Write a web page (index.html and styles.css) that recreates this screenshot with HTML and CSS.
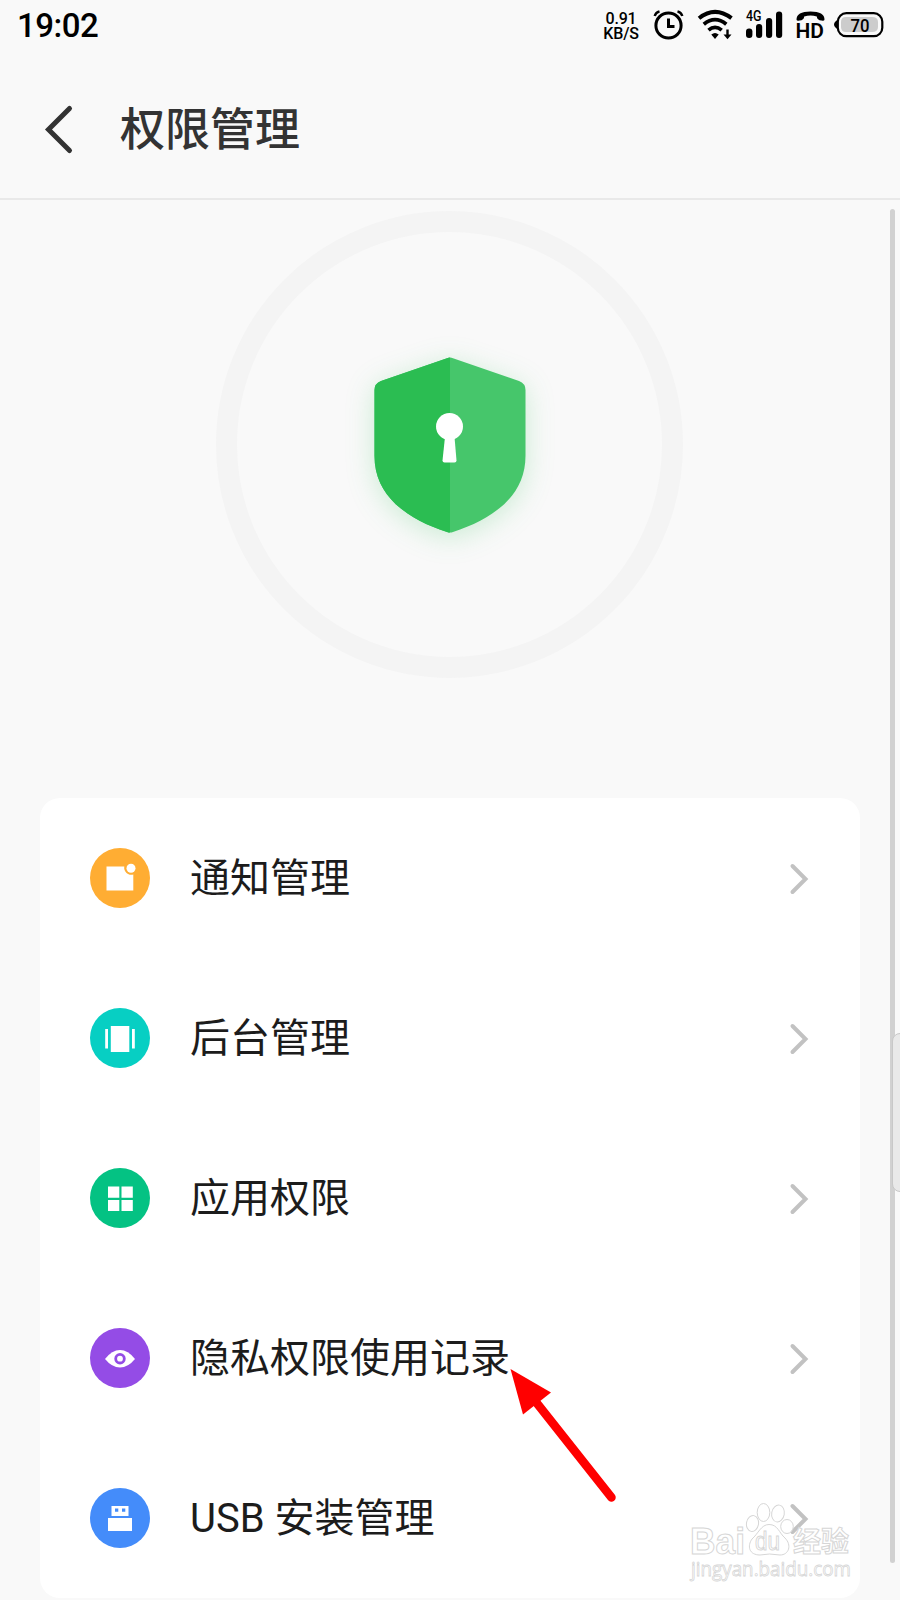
FILE: index.html
```html
<!DOCTYPE html>
<html lang="zh-CN">
<head>
  <meta charset="UTF-8">
  <meta name="viewport" content="width=device-width, initial-scale=1.0">
  <title>权限管理</title>
  <link rel="stylesheet" href="styles.css">
</head>
<body>
  <div class="status-bar">
    <span class="time">19:02</span>
    <div class="status-icons">
      <div class="speed"><span>0.91</span><span>KB/S</span></div>
      <svg class="alarm" width="30" height="30" viewBox="0 0 30 30" fill="none" stroke="#000">
        <circle cx="14.5" cy="15.5" r="12.6" stroke-width="3"/>
        <path d="M14.5 8.5v8h6" stroke-width="3"/>
        <path d="M.7 6Q1.5 2.500 5.500 1.300M23.500 1.300Q27.500 2.500 28.300 6" stroke-width="2.4"/>
      </svg>
      <svg class="wifi" width="36" height="30" viewBox="0 0 36 30" fill="none" stroke="#000">
        <path d="M1 8.200Q17-4.500 33.500 8.200" stroke-width="4"/>
        <path d="M5.800 14.200Q17 5 28.300 14.200" stroke-width="3.800"/>
        <path d="M10.500 20.200Q17 14.500 23.700 20.200" stroke-width="3.600"/>
        <path d="M13.300 24.500Q17 21.500 20.700 24.500L17 29z" fill="#000" stroke="none"/>
        <path d="M29.500 19.500v7" stroke-width="2.400"/>
        <path d="M25.500 24.500h8l-4 4.800z" fill="#000" stroke="none"/>
      </svg>
      <svg class="signal" width="38" height="30" viewBox="0 0 38 30">
        <text class="net" x="0" y="11" textLength="15.500" lengthAdjust="spacingAndGlyphs">4G</text>
        <rect x="0" y="18.500" width="6.400" height="9.500" rx="3"/>
        <rect x="10" y="14" width="6.200" height="14" rx="3"/>
        <rect x="20" y="8" width="6.200" height="20" rx="3"/>
        <rect x="30" y="1.500" width="6.200" height="26.500" rx="3"/>
      </svg>
      <svg class="volte" width="30" height="36" viewBox="0 0 30 36">
        <path d="M.5 9.500Q.5 1.500 14.500 1.500T28.500 9.500Q28.500 11 25.500 10.600Q21 10.200 20.800 6.500Q14.500 4.500 8.200 6.500Q8 10.200 3.500 10.600Q.5 11 .5 9.500z"/>
        <text class="hd" x="-.5" y="28" textLength="28.500" lengthAdjust="spacingAndGlyphs">HD</text>
      </svg>
      <svg class="battery" width="50" height="28" viewBox="0 0 50 28">
        <path d="M4 8.500Q0 11 0 13.500T4 18.500z"/>
        <rect x="3.800" y="2.200" width="44.500" height="23" rx="8.500" fill="none" stroke="#000" stroke-width="2.200"/>
        <path d="M12 6h26q6 0 6 5v5q0 5-6 5H12q-5 0-5-5v-5q0-5 5-5z" fill="#ccc"/>
        <text class="percent" x="16.500" y="20.500" textLength="19" lengthAdjust="spacingAndGlyphs">70</text>
      </svg>
    </div>
  </div>

  <header class="header">
    <svg class="back" width="30" height="50" viewBox="0 0 30 50" fill="none" stroke="#333" stroke-width="5" stroke-linecap="round">
      <path d="M25.500 4.500L4.500 25.500L25.500 46.500"/>
    </svg>
    <h1>权限管理</h1>
  </header>

  <main>
    <div class="hero">
      <div class="ring">
        <svg class="shield" width="152" height="178" viewBox="0 0 152 178">
          <path d="M73 1.200Q76 0 79 1.200L145 24Q151.500 26.500 151.500 33V99C151.500 139 119 162 79 175Q76 176 73 175C33 162 .5 139 .5 99V33Q.5 26.500 7 24z" fill="#46c66b"/>
          <path d="M76 .5Q74.500 .5 73 1.200L7 24Q.5 26.500 .5 33V99C.5 139 33 162 73 175Q74.500 175.600 76 175.600z" fill="#2bbd52"/>
          <circle cx="75.500" cy="69.500" r="13.500" fill="#fff"/>
          <path d="M71 80h9.500l2 23.500q0 2-2 2h-10q-2 0-2-2z" fill="#fff"/>
        </svg>
      </div>
    </div>

    <div class="menu">
      <div class="menu-item">
        <div class="icon orange">
          <svg width="60" height="60" viewBox="0 0 60 60" fill="#fff">
            <path d="M16.500 18.500H34.300A7 7 0 0 0 43.300 26.500V42.500H16.500z"/>
            <circle cx="41" cy="20.200" r="4.500"/>
          </svg>
        </div>
        <span class="label">通知管理</span>
        <svg class="arrow" width="20" height="32" viewBox="0 0 20 32"><path d="M2.500 4l13 13l-13 13"/></svg>
      </div>
      <div class="menu-item">
        <div class="icon teal">
          <svg width="60" height="60" viewBox="0 0 60 60" fill="#fff">
            <rect x="20.800" y="18" width="18.500" height="26"/>
            <rect x="15.200" y="21" width="2.800" height="19.500"/>
            <rect x="42" y="21" width="2.800" height="19.500"/>
          </svg>
        </div>
        <span class="label">后台管理</span>
        <svg class="arrow" width="20" height="32" viewBox="0 0 20 32"><path d="M2.500 4l13 13l-13 13"/></svg>
      </div>
      <div class="menu-item">
        <div class="icon green">
          <svg width="60" height="60" viewBox="0 0 60 60" fill="#fff">
            <path d="M18 18.500h11.300v11.300H18zM31.500 18.500h11.300v11.300H31.500zM18 32h11.300v11H18zM31.500 32h11.300v11H31.500z"/>
          </svg>
        </div>
        <span class="label">应用权限</span>
        <svg class="arrow" width="20" height="32" viewBox="0 0 20 32"><path d="M2.500 4l13 13l-13 13"/></svg>
      </div>
      <div class="menu-item">
        <div class="icon purple">
          <svg width="60" height="60" viewBox="0 0 60 60">
            <path d="M15 31Q22 22 30 22T45 31Q38 39.500 30 39.500T15 31z" fill="#fff"/>
            <circle cx="30" cy="30.700" r="4.300" fill="#fff" stroke="#944ce6" stroke-width="2.800"/>
          </svg>
        </div>
        <span class="label">隐私权限使用记录</span>
        <svg class="arrow" width="20" height="32" viewBox="0 0 20 32"><path d="M2.500 4l13 13l-13 13"/></svg>
      </div>
      <div class="menu-item">
        <div class="icon blue">
          <svg width="60" height="60" viewBox="0 0 60 60" fill="#fff">
            <path fill-rule="evenodd" d="M21.500 18h17v10h-17zM25 20.500v3.300h3.300v-3.300zM32 20.500v3.300h3.300v-3.300z"/>
            <rect x="18" y="30" width="24" height="13"/>
          </svg>
        </div>
        <span class="label">USB 安装管理</span>
        <svg class="arrow" width="20" height="32" viewBox="0 0 20 32"><path d="M2.500 4l13 13l-13 13"/></svg>
      </div>
    </div>
  </main>

  <div class="scrollbar"></div>
  <div class="side-handle"></div>

  <svg class="pointer" width="110" height="136" viewBox="0 0 110 136">
    <path d="M22 28L101.500 128.500" stroke="#f00" stroke-width="8.500" stroke-linecap="round"/>
    <path d="M.5 0L41 23.500L13 45.500z" fill="#f00"/>
  </svg>

  <svg class="watermark" width="176" height="96" viewBox="0 0 176 96">
    <g class="paw">
      <ellipse cx="64.500" cy="26.500" rx="6" ry="8" transform="rotate(10 64.500 26.500)"/>
      <ellipse cx="75.500" cy="15.500" rx="6.300" ry="9"/>
      <ellipse cx="90" cy="16.500" rx="6.300" ry="8.500" transform="rotate(10 90 16.500)"/>
      <ellipse cx="99" cy="29.500" rx="6.300" ry="7"/>
      <path d="M81 27.500C90 27.500 91 36 97 41C104 48 101 58 92 58Q81 56 72 58C61 58 59 49 64 42C70 37 73 27.500 81 27.500z"/>
    </g>
    <text class="wm-logo" x="2" y="57" textLength="55" lengthAdjust="spacingAndGlyphs">Bai</text>
    <text class="wm-du" x="67" y="53" textLength="25" lengthAdjust="spacingAndGlyphs">du</text>
    <text class="wm-cn" x="105" y="55" textLength="56" lengthAdjust="spacingAndGlyphs">经验</text>
    <text class="wm-url" x="3" y="79" textLength="160" lengthAdjust="spacingAndGlyphs">jingyan.baidu.com</text>
  </svg>
</body>
</html>
```
FILE: styles.css
```css
* {
  box-sizing: border-box;
}
body {
  position: relative;
  width: 900px;
  height: 1600px;
  margin: 0;
  overflow: hidden;
  background: #f9f9f9;
  font-family: Roboto, "Noto Sans CJK SC", sans-serif;
}
svg {
  display: block;
  flex-shrink: 0;
  overflow: visible;
}
.status-bar {
  display: flex;
  justify-content: space-between;
  height: 50px;
  padding: 10px 16px 0 17px;
  color: #000;
}
.time {
  font-size: 33px;
  line-height: 32px;
  font-weight: 500;
  letter-spacing: -0.5px;
}
.status-icons {
  display: flex;
}
.speed {
  display: flex;
  flex-direction: column;
  width: 36px;
  margin-right: 15px;
  padding-top: 1px;
  font-size: 16px;
  line-height: 15px;
  font-weight: 500;
  letter-spacing: -0.2px;
  text-align: center;
}
.alarm {
  margin-right: 14px;
}
.wifi {
  margin-right: 12px;
}
.signal {
  margin-right: 12px;
}
.volte {
  margin-right: 8px;
}
.battery {
  margin-top: 1px;
}
.net {
  font-size: 14px;
  font-weight: 500;
}
.hd {
  font-size: 20px;
  font-weight: 600;
}
.percent {
  font-size: 19px;
  font-weight: 500;
}
.header {
  display: flex;
  align-items: center;
  height: 150px;
  padding: 10px 0 0 44px;
  border-bottom: 2px solid #e9e9e9;
}
.header h1 {
  margin: 3px 0 0 46px;
  font-size: 45px;
  line-height: 60px;
  font-weight: 500;
  color: #333;
}
.hero {
  display: flex;
  justify-content: center;
  height: 598px;
  padding: 11px 1px 0 0;
}
.ring {
  display: flex;
  justify-content: center;
  width: 467px;
  height: 467px;
  padding: 125px 0 0 1px;
  border: 21px solid #f4f4f4;
  border-radius: 50%;
}
.shield {
  filter: drop-shadow(0 5px 14px rgba(43, 189, 82, 0.22));
}
.menu {
  width: 820px;
  height: 800px;
  margin: 0 40px;
  background: #fff;
  border-radius: 20px;
}
.menu-item {
  display: flex;
  align-items: center;
  height: 160px;
  padding: 0 50px;
}
.icon {
  width: 60px;
  height: 60px;
  margin-right: 40px;
  border-radius: 50%;
}
.orange {
  background: #ffad33;
}
.teal {
  background: #07cfc3;
}
.green {
  background: #04c283;
}
.purple {
  background: #944ce6;
}
.blue {
  background: #448cfa;
}
.label {
  flex: 1;
  padding-top: 2px;
  font-size: 40px;
  line-height: 60px;
  color: #1c1c1c;
}
.arrow {
  fill: none;
  stroke: #c2c2c2;
  stroke-width: 4;
  stroke-linecap: round;
}
.scrollbar {
  position: absolute;
  top: 209px;
  right: 5px;
  width: 5px;
  height: 1354px;
  border-radius: 3px;
  background: #d1d1d1;
}
.side-handle {
  position: absolute;
  top: 1033px;
  right: -12px;
  width: 20px;
  height: 159px;
  border: 1px solid #c8c8c8;
  border-radius: 8px;
  background: #e9e9e9;
}
.pointer {
  position: absolute;
  top: 1369px;
  left: 510px;
}
.watermark {
  position: absolute;
  top: 1497px;
  left: 688px;
  fill: #fff;
  stroke: #d6d6d6;
  stroke-width: 1;
}
.paw {
  fill-opacity: 0.75;
}
.wm-logo {
  font: bold 36px "Liberation Sans", sans-serif;
}
.wm-du {
  font: 26px "Liberation Sans", sans-serif;
}
.wm-cn {
  font: bold 28px "Noto Sans CJK SC", sans-serif;
}
.wm-url {
  font: 20px "Open Sans", sans-serif;
  stroke-width: 0.8;
}
```
